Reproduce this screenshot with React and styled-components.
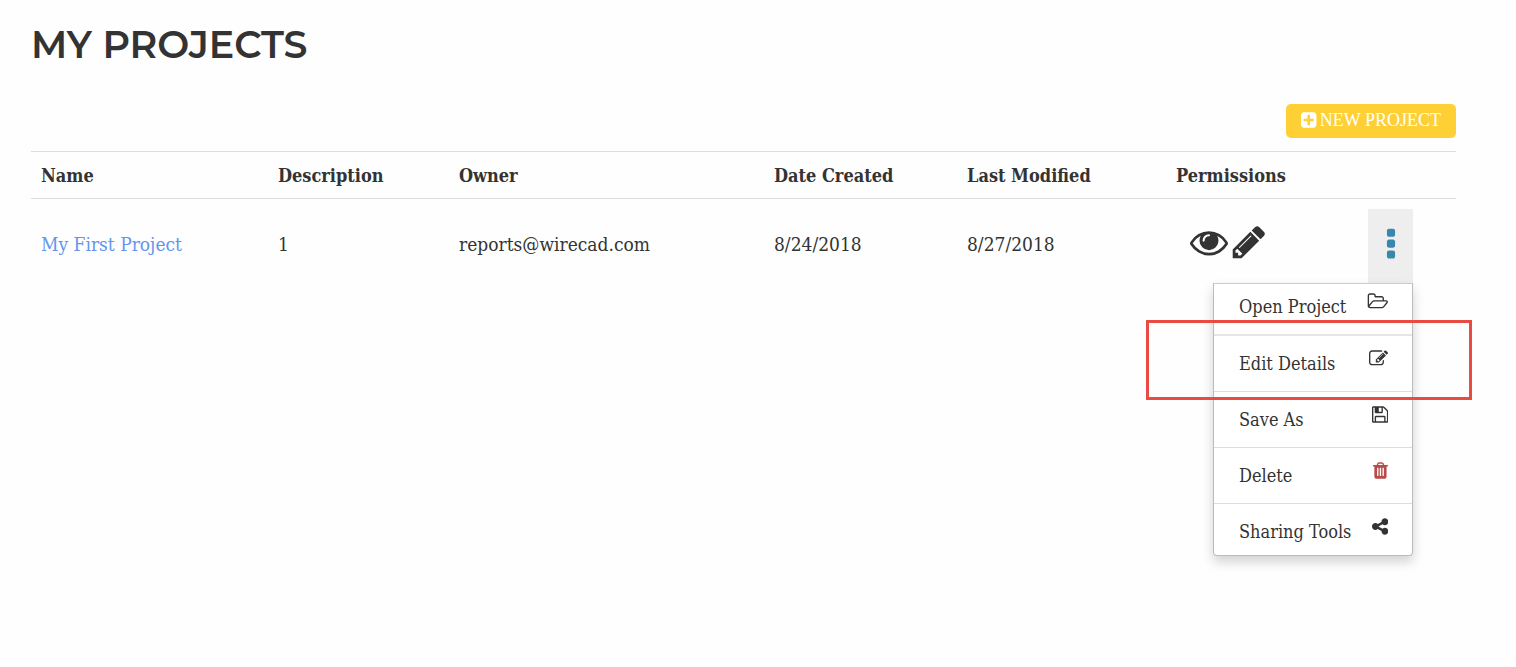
import React, { useState } from 'react';
import styled, { createGlobalStyle } from 'styled-components';

const GlobalStyle = createGlobalStyle`
  * {
    box-sizing: border-box;
  }

  body {
    margin: 0;
    background: #fefefe;
    color: #333;
    font-family: 'Roboto Slab', 'DejaVu Serif Condensed', 'DejaVu Serif', serif;
    font-size: 18px;
    line-height: 26px;
  }
`;

// each icon: viewBox x offset, viewBox width, path (all are 1792 units high)
const icons = {
  plus: [128, 1536, 'M1408 960v-128q0-26-19-45t-45-19h-320v-320q0-26-19-45t-45-19h-128q-26 0-45 19t-19 45v320h-320q-26 0-45 19t-19 45v128q0 26 19 45t45 19h320v320q0 26 19 45t45 19h128q26 0 45-19t19-45v-320h320q26 0 45-19t19-45zm256-544v960q0 119-84.5 203.5t-203.5 84.5h-960q-119 0-203.5-84.5t-84.5-203.5v-960q0-119 84.5-203.5t203.5-84.5h960q119 0 203.5 84.5t84.5 203.5z'],
  eye: [0, 1792, 'M1664 960q-152-236-381-353 61 104 61 225 0 185-131.5 316.5t-316.5 131.5-316.5-131.5-131.5-316.5q0-121 61-225-229 117-381 353 133 205 333.5 326.5t434.5 121.5 434.5-121.5 333.5-326.5zm-720-384q0-20-14-34t-34-14q-125 0-214.5 89.5t-89.5 214.5q0 20 14 34t34 14 34-14 14-34q0-86 61-147t147-61q20 0 34-14t14-34zm848 384q0 34-20 69-140 230-376.5 368.5t-499.5 138.5-499.5-139-376.5-368q-20-35-20-69t20-69q140-229 376.5-368t499.5-139 499.5 139 376.5 368q20 35 20 69z'],
  pencil: [0, 1792, 'M491 1536l91-91-235-235-91 91v107h128v128h107zm523-928q0-22-22-22-10 0-17 7l-542 542q-7 7-7 17 0 22 22 22 10 0 17-7l542-542q7-7 7-17zm-54-192l416 416-832 832h-416v-416zm683 96q0 53-37 90l-166 166-416-416 166-165q36-38 90-38 53 0 91 38l235 234q37 39 37 91z'],
  dots: [0, 1792, 'M1088 1248v192q0 40-28 68t-68 28h-192q-40 0-68-28t-28-68v-192q0-40 28-68t68-28h192q40 0 68 28t28 68zm0-512v192q0 40-28 68t-68 28h-192q-40 0-68-28t-28-68v-192q0-40 28-68t68-28h192q40 0 68 28t28 68zm0-512v192q0 40-28 68t-68 28h-192q-40 0-68-28t-28-68v-192q0-40 28-68t68-28h192q40 0 68 28t28 68z'],
  folder: [0, 1984, 'M1845 931q0-35-53-35h-1088q-40 0-85.5 21.5t-71.5 52.5l-294 363q-18 24-18 40 0 35 53 35h1088q40 0 86-22t71-53l294-363q18-22 18-39zm-1141-163h768v-160q0-40-28-68t-68-28h-576q-40 0-68-28t-28-68v-64q0-40-28-68t-68-28h-320q-40 0-68 28t-28 68v853l256-315q44-53 116-87.5t140-34.5zm1269 163q0 62-46 120l-295 363q-43 53-116 87.5t-140 34.5h-1088q-92 0-158-66t-66-158v-960q0-92 66-158t158-66h320q92 0 158 66t66 158v32h544q92 0 158 66t66 158v160h192q54 0 99 24.5t67 70.5q15 32 15 68z'],
  edit: [0, 1792, 'M888 1184l116-116-152-152-116 116v56h96v96h56zm440-720q-16-16-33 1l-350 350q-17 17-1 33t33-1l350-350q17-17 1-33zm80 594v190q0 119-84.5 203.5t-203.5 84.5h-832q-119 0-203.5-84.5t-84.5-203.5v-832q0-119 84.5-203.5t203.5-84.5h832q63 0 117 25 15 7 18 23 3 17-9 29l-49 49q-14 14-32 8-23-6-45-6h-832q-66 0-113 47t-47 113v832q0 66 47 113t113 47h832q66 0 113-47t47-113v-126q0-13 9-22l64-64q15-15 35-7t20 29zm-96-738l288 288-672 672h-288v-288zm444 132l-92 92-288-288 92-92q28-28 68-28t68 28l152 152q28 28 28 68t-28 68z'],
  save: [128, 1536, 'M512 1536h768v-384h-768v384zm896 0h128v-896q0-14-10-38.5t-20-34.5l-281-281q-10-10-34-20t-39-10v416q0 40-28 68t-68 28h-576q-40 0-68-28t-28-68v-416h-128v1280h128v-416q0-40 28-68t68-28h832q40 0 68 28t28 68v416zm-384-928v-320q0-13-9.5-22.5t-22.5-9.5h-192q-13 0-22.5 9.5t-9.5 22.5v320q0 13 9.5 22.5t22.5 9.5h192q13 0 22.5-9.5t9.5-22.5zm640 32v928q0 40-28 68t-68 28h-1344q-40 0-68-28t-28-68v-1344q0-40 28-68t68-28h928q40 0 88 20t76 48l280 280q28 28 48 76t20 88z'],
  trash: [192, 1408, 'M704 1376v-704q0-14-9-23t-23-9h-64q-14 0-23 9t-9 23v704q0 14 9 23t23 9h64q14 0 23-9t9-23zm256 0v-704q0-14-9-23t-23-9h-64q-14 0-23 9t-9 23v704q0 14 9 23t23 9h64q14 0 23-9t9-23zm256 0v-704q0-14-9-23t-23-9h-64q-14 0-23 9t-9 23v704q0 14 9 23t23 9h64q14 0 23-9t9-23zm-544-992h448l-48-117q-7-9-17-11h-317q-10 2-17 11zm928 32v64q0 14-9 23t-23 9h-96v948q0 83-47 143.5t-113 60.5h-832q-66 0-113-58.5t-47-141.5v-952h-96q-14 0-23-9t-9-23v-64q0-14 9-23t23-9h309l70-167q15-37 54-63t79-26h320q40 0 79 26t54 63l70 167h309q14 0 23 9t9 23z'],
  share: [128, 1536, 'M1344 1024q133 0 226.5 93.5t93.5 226.5-93.5 226.5-226.5 93.5-226.5-93.5-93.5-226.5q0-12 2-34l-360-180q-92 86-218 86-133 0-226.5-93.5t-93.5-226.5 93.5-226.5 226.5-93.5q126 0 218 86l360-180q-2-22-2-34 0-133 93.5-226.5t226.5-93.5 226.5 93.5 93.5 226.5-93.5 226.5-226.5 93.5q-126 0-218-86l-360 180q2 22 2 34t-2 34l360 180q92-86 218-86z']
};

const Svg = styled.svg`
  display: block;
  flex: none;
  height: ${(props) => props.$size}px;
  fill: ${(props) => props.$color || 'currentColor'};
`;

const Icon = ({ name, size, color }) => {
  const [x, width, path] = icons[name];
  return (
    <Svg $size={size} $color={color} viewBox={`${x} 0 ${width} 1792`} aria-hidden="true">
      <path d={path} />
    </Svg>
  );
};

const Page = styled.main`
  min-height: 100vh;
  padding: 21px 60px 40px 31px;
`;

const Title = styled.h1`
  margin: 0;
  font-family: Montserrat, Inter, sans-serif;
  font-size: 38px;
  font-weight: 650;
  line-height: 48px;
  text-transform: uppercase;
`;

const Toolbar = styled.div`
  display: flex;
  justify-content: flex-end;
  padding: 35px 0 13px;
`;

const NewButton = styled.button`
  display: flex;
  align-items: center;
  gap: 3px;
  height: 34px;
  padding: 0 15px 2px;
  border: 0;
  border-radius: 5px;
  background: #ffd035;
  color: #fff;
  font-family: 'Liberation Serif', serif;
  font-size: 18px;
  cursor: pointer;
`;

const Table = styled.table`
  width: 100%;
  table-layout: fixed;
  border-collapse: separate;
  border-spacing: 0;
`;

const Col = styled.col`
  width: ${(props) => (props.$width ? `${props.$width}px` : 'auto')};
`;

const HeadCell = styled.th`
  padding: 11px 10px 9px;
  border-top: 1px solid #ddd;
  border-bottom: 1px solid #ddd;
  text-align: left;
  font-weight: 700;
`;

const Cell = styled.td`
  padding: 10px;
  vertical-align: top;
  font-size: 19px;
  line-height: 70px;
`;

const ProjectLink = styled.a`
  color: #6495ed;
  text-decoration: none;
`;

const Permissions = styled.div`
  display: flex;
  align-items: center;
  gap: 2px;
  height: 66px;
  padding-left: 14px;
`;

const Dropdown = styled.div`
  position: relative;
  width: 45px;
`;

const Toggle = styled.button`
  display: flex;
  align-items: center;
  justify-content: center;
  width: 45px;
  height: 74px;
  padding: 0 0 2px;
  border: 0;
  background: #eee;
  color: #3a87ad;
  cursor: pointer;
`;

const Menu = styled.ul`
  position: absolute;
  top: 100%;
  right: 0;
  width: 200px;
  margin: 0;
  padding: 0;
  list-style: none;
  background: #fff;
  border: 1px solid #bbb;
  border-top-color: #ccc;
  border-radius: 0 0 4px 4px;
  box-shadow: 0 6px 12px rgba(0, 0, 0, 0.175);
`;

const MenuItem = styled.li`
  position: relative;
  border-bottom: 1px solid #ddd;

  &:first-child {
    border-bottom: 2px solid #e5e5e5;
  }

  &:last-child {
    border-bottom: 0;
  }
`;

const MenuButton = styled.button`
  display: flex;
  align-items: flex-start;
  justify-content: space-between;
  width: 100%;
  height: 55px;
  padding: 13px 24px 0 25px;
  border: 0;
  background: none;
  color: inherit;
  font-family: inherit;
  font-size: 18px;
  line-height: 30px;
  white-space: nowrap;
  cursor: pointer;

  ${MenuItem}:first-child & {
    height: 50px;
    padding-top: 8px;
  }

  ${MenuItem}:last-child & {
    height: 51px;
  }
`;

const Highlight = styled.span`
  position: absolute;
  z-index: 1;
  top: -16px;
  right: -60px;
  bottom: -9px;
  left: -68px;
  border: 3px solid #e94b43;
  pointer-events: none;
`;

const columns = [
  { label: 'Name', width: 237 },
  { label: 'Description', width: 181 },
  { label: 'Owner' },
  { label: 'Date Created', width: 193 },
  { label: 'Last Modified', width: 209 },
  { label: 'Permissions', width: 192 },
  { label: '', width: 98 }
];

const actions = [
  { label: 'Open Project', icon: 'folder' },
  { label: 'Edit Details', icon: 'edit', highlight: true },
  { label: 'Save As', icon: 'save' },
  { label: 'Delete', icon: 'trash', color: '#b94a48' },
  { label: 'Sharing Tools', icon: 'share' }
];

const ProjectMenu = () => {
  const [open, setOpen] = useState(true);

  return (
    <Dropdown>
      <Toggle aria-label="Project actions" aria-expanded={open} onClick={() => setOpen(!open)}>
        <Icon name="dots" size={38} />
      </Toggle>
      {open && (
        <Menu>
          {actions.map((action) => (
            <MenuItem key={action.label}>
              <MenuButton>
                {action.label}
                <Icon name={action.icon} size={19} color={action.color} />
              </MenuButton>
              {action.highlight && <Highlight />}
            </MenuItem>
          ))}
        </Menu>
      )}
    </Dropdown>
  );
};

const App = () => (
  <Page>
    <GlobalStyle />
    <Title>My Projects</Title>
    <Toolbar>
      <NewButton>
        <Icon name="plus" size={18} />
        NEW PROJECT
      </NewButton>
    </Toolbar>
    <Table>
      <colgroup>
        {columns.map((col, i) => <Col key={i} $width={col.width} />)}
      </colgroup>
      <thead>
        <tr>
          {columns.map((col, i) => <HeadCell key={i}>{col.label}</HeadCell>)}
        </tr>
      </thead>
      <tbody>
        <tr>
          <Cell><ProjectLink href="#project">My First Project</ProjectLink></Cell>
          <Cell>1</Cell>
          <Cell>reports@wirecad.com</Cell>
          <Cell>8/24/2018</Cell>
          <Cell>8/27/2018</Cell>
          <Cell>
            <Permissions>
              <Icon name="eye" size={38} />
              <Icon name="pencil" size={38} />
            </Permissions>
          </Cell>
          <Cell><ProjectMenu /></Cell>
        </tr>
      </tbody>
    </Table>
  </Page>
);

export default App;
